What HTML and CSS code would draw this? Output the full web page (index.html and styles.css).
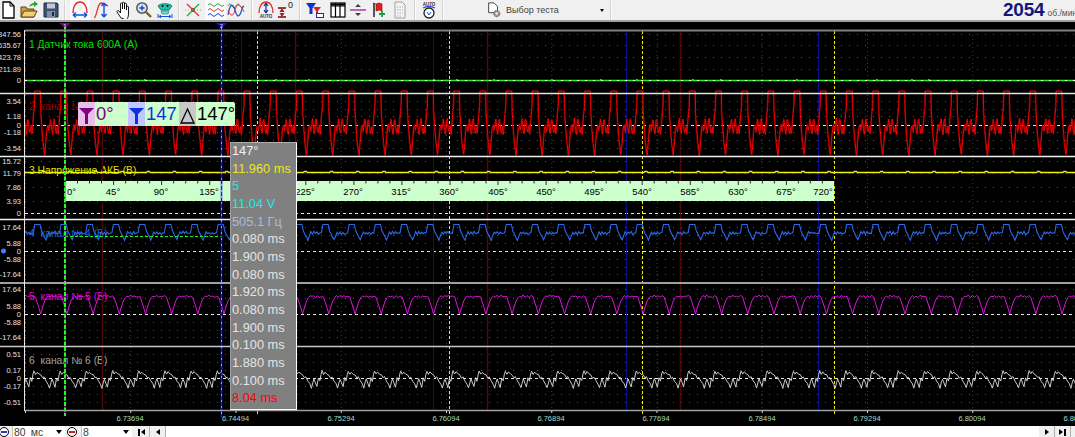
FILE: index.html
```html
<!DOCTYPE html>
<html lang="ru">
<head>
<meta charset="utf-8">
<title>Осциллограф</title>
<link rel="stylesheet" href="styles.css">
<script src="app.js" defer></script>
</head>
<body>
<div class="app">
  <header class="toolbar">
    <span class="tool"><svg viewBox="0 0 18 18"><path d="M4 1h7l4 4v12H4z" fill="#fff" stroke="#000" stroke-width="1.3"/><path d="M11 1v4h4" fill="none" stroke="#000"/></svg></span>
    <span class="tool"><svg viewBox="0 0 18 18"><path d="M1 16V6h5l1 2h7v8z" fill="#c8a040" stroke="#604010"/><path d="M1 16l3-6h13l-3 6z" fill="#f0d070" stroke="#604010"/><path d="M9 6c1-3 3-4 5-4V0l4 3-4 3V4c-2 0-3 1-5 2z" fill="#30a030"/></svg></span>
    <span class="tool"><svg viewBox="0 0 18 18"><path d="M2 2h13l1 1v13H2z" fill="#405070" stroke="#202840"/><rect x="5" y="2.500" width="8" height="5" fill="#c0c8d8"/><rect x="5" y="10" width="8" height="6" fill="#8090a8"/><rect x="10" y="11" width="2" height="4" fill="#202840"/></svg></span>
    <span class="sep"></span>
    <span class="tool tool-on"><svg viewBox="0 0 18 18"><path d="M2 12C2 5 5 1 9 1s7 4 7 11" fill="none" stroke="#e03030" stroke-width="1.500"/><path d="M2 14h14M2 14l3-2.500M2 14l3 2.500M16 14l-3-2.500M16 14l-3 2.500" fill="none" stroke="#1050e0" stroke-width="1.400"/></svg></span>
    <span class="tool"><svg viewBox="0 0 18 18"><path d="M1 17C4 16 4 3 8 2c3 0 5 2 7 3" fill="none" stroke="#e03030" stroke-width="1.300"/><path d="M11 2v14M11 2L8.500 5M11 2l2.500 3M11 16l-2.500-3M11 16l2.500-3" fill="none" stroke="#1050e0" stroke-width="1.400"/></svg></span>
    <span class="tool"><svg viewBox="0 0 18 18"><path d="M6 17l-4-6c-.5-1 1-2 2-1l1.500 2V3c0-1.500 2-1.500 2 0v5-6c0-1 2-1 2 0v6-5c0-1 2-1 2 0v6-3c0-1 2-1 2 0v7c0 3-1 4-2 6z" fill="#fff" stroke="#000" stroke-width=".9"/></svg></span>
    <span class="tool"><svg viewBox="0 0 18 18"><circle cx="7" cy="7" r="5.200" fill="#d0e4f8" stroke="#404040" stroke-width="1.300"/><path d="M4.500 7h5M7 4.500v5" stroke="#1040c0" stroke-width="1.300"/><path d="M11 11l5 5" stroke="#806020" stroke-width="2.400"/></svg></span>
    <span class="tool"><svg viewBox="0 0 18 18"><path d="M2 5c2-3 12-3 14 0l-3 4H5z" fill="#20c0b0" stroke="#108070"/><path d="M5 10h8l-1 3H6z" fill="#60e0d8" stroke="#108070" stroke-width=".6"/><circle cx="6.500" cy="5" r="1" fill="#000"/><circle cx="11.500" cy="5" r="1" fill="#000"/><path d="M3 15.500h12M3 15.500l2-1.500M3 15.500l2 1.500M15 15.500l-2-1.500M15 15.500l-2 1.500M2 13v4M16 13v4" stroke="#1050e0" fill="none"/></svg></span>
    <span class="sep"></span>
    <span class="tool"><svg viewBox="0 0 18 18"><path d="M3 3l12 12" stroke="#e03030" stroke-width="1.200"/><path d="M15 3L3 15" stroke="#30a040" stroke-width="1.200"/><path d="M1 9h16" stroke="#a0a0a0" stroke-dasharray="1 2"/><path d="M7 9l2-2 2 2-2 2z" fill="none" stroke="#e03030"/></svg></span>
    <span class="tool tool-on"><svg viewBox="0 0 18 18"><path d="M1 4q2-3 4 0t4 0 4 0 4 0" fill="none" stroke="#30a040"/><path d="M1 9q2-3 4 0t4 0 4 0 4 0" fill="none" stroke="#e03030"/><path d="M1 14q2-3 4 0t4 0 4 0 4 0" fill="none" stroke="#1050e0"/></svg></span>
    <span class="tool"><svg viewBox="0 0 18 18"><path d="M1 5q2-4 4 0t4 0 4 0 4 0" fill="none" stroke="#30a040"/><path d="M1 14C3 2 6 2 8 9s4 8 6 2 2-6 3-6" fill="none" stroke="#1050e0" stroke-width="1.200"/><path d="M1 9c3 7 5 7 7 0s5-7 9 2" fill="none" stroke="#e03030"/></svg></span>
    <span class="sep"></span>
    <span class="tool"><svg viewBox="0 0 18 18"><path d="M2 12C2 5 5 1 9 1s7 4 7 11" fill="none" stroke="#e03030" stroke-width="1.300"/><path d="M9 2v10M9 2L7 5M9 2l2 3M9 12l-2-3M9 12l2-3" fill="none" stroke="#1030a0" stroke-width="1.200"/><text class="tiny" x="9" y="17" text-anchor="middle">AUTO</text></svg></span>
    <span class="tool"><svg viewBox="0 0 18 18"><path d="M1 7h8M1 16h8" stroke="#800000" stroke-width="1.300"/><path d="M5 7l-2.500 4h5zM5 16l-2.500-4h5z" fill="#a02020"/><text class="zero" x="11" y="7">0</text></svg></span>
    <span class="sep"></span>
    <span class="tool"><svg viewBox="0 0 18 18"><path d="M0 2h10L6.500 7v6h-3V7z" fill="#1030d0"/><path d="M7 6h8l-3 4v3H10v-3z" fill="#e02030"/><rect x="10.500" y="12.500" width="7" height="4" fill="#fff" stroke="#1030a0"/></svg></span>
    <span class="tool"><svg viewBox="0 0 18 18"><rect x="2" y="2" width="14" height="14" fill="#fff" stroke="#000" stroke-width="1.200"/><path d="M2 5h14M6.500 2v14M11 2v14" stroke="#000" stroke-width="1.200"/><path d="M2 3.500h14" stroke="#000" stroke-width="2"/></svg></span>
    <span class="tool"><svg viewBox="0 0 18 18"><path d="M1 9h16" stroke="#a020a0" stroke-width="1.300"/><path d="M9 3l-3 3h6zM9 15l-3-3h6z" fill="#404040"/></svg></span>
    <span class="tool"><svg viewBox="0 0 18 18"><path d="M3 2l3 1 3-1 3 1v7l-3-1-3 1V3" fill="#e02020" stroke="#800000" stroke-width=".6"/><path d="M4 2v14" stroke="#202020" stroke-width="1.500"/><path d="M12 10v6M9 13h6" stroke="#20a030" stroke-width="1.800"/></svg></span>
    <span class="tool"><svg viewBox="0 0 18 18"><path d="M4 1h7l3 3v13H4z" fill="#f4f4f4" stroke="#a0a0a0"/><path d="M6 6h6M6 9h6M6 12h6M6 15h4" stroke="#b0b0b0" stroke-dasharray="1.500 1"/></svg></span>
    <span class="sep"></span>
    <span class="tool"><svg viewBox="0 0 18 18"><text class="tiny" x="9" y="4.500" text-anchor="middle">AUTO</text><path d="M3 7q6-3 12 0" fill="none" stroke="#1050e0" stroke-width="1.300"/><circle cx="9" cy="12" r="5" fill="#fff" stroke="#202020" stroke-width="1.300"/><path d="M7 11l2 3 2-3" fill="none" stroke="#1050e0"/></svg></span>
    <span class="sep"></span>
    <div class="combo">
      <svg class="combo-icon" viewBox="0 0 18 18"><path d="M3 1h6l4 4v7H3z" fill="#fff" stroke="#303030"/><circle cx="12" cy="13" r="3.500" fill="#a0a0a0" stroke="#404040" stroke-dasharray="1.500 .8"/><circle cx="12" cy="13" r="1.200" fill="#fff"/></svg>
      <span class="combo-text">Выбор теста</span>
      <span class="combo-arrow"></span>
    </div>
    <span class="sep"></span>
    <span class="gap"></span>
    <div class="rpm"><b>2054</b><span>об./мин</span></div>
  </header>
  <div class="rule"></div>

  <main class="scope">
    <svg class="plot" viewBox="0 22 1075 404" aria-label="Осциллограмма">
      <g id="grid"></g>
      <g class="ticks">
        <text x="21" y="36.500">847.56</text><text x="21" y="47.500">635.67</text><text x="21" y="59.500">423.78</text><text x="21" y="71.500">211.89</text><text x="21" y="82.500">0</text>
        <text x="21" y="103.500">3.54</text><text x="21" y="118.500">1.18</text><text x="21" y="127.500">0</text><text x="21" y="134.500">-1.18</text><text x="21" y="150.500">-3.54</text>
        <text x="21" y="163.500">15.72</text><text x="21" y="175.500">11.79</text><text x="21" y="189.500">7.86</text><text x="21" y="203.500">3.93</text><text x="21" y="215.500">0</text>
        <text x="21" y="229.500">17.64</text><text x="21" y="245.500">5.88</text><text x="21" y="253.500">0</text><text x="21" y="261.500">-5.88</text><text x="21" y="276.500">-17.64</text>
        <text x="21" y="291.500">17.64</text><text x="21" y="308.500">5.88</text><text x="21" y="316.500">0</text><text x="21" y="324.500">-5.88</text><text x="21" y="339.500">-17.64</text>
        <text x="21" y="356.500">0.51</text><text x="21" y="372.500">0.17</text><text x="21" y="380.500">0</text><text x="21" y="388.500">-0.17</text><text x="21" y="404.500">-0.51</text>
      </g>
      <g class="times">
        <text x="130" y="421">6.73694</text><text x="235.500" y="421">6.74494</text><text x="341" y="421">6.75294</text><text x="446" y="421">6.76094</text><text x="551" y="421">6.76894</text><text x="656" y="421">6.77694</text><text x="762" y="421">6.78494</text><text x="867" y="421">6.79294</text><text x="972" y="421">6.80094</text><text x="1077" y="421">6.80894</text>
      </g>
      <g class="names">
        <text class="n1" x="29" y="47.500">1 Датчик тока 600А (А)</text>
        <text class="n2" x="29" y="110">2  канал №</text>
        <text class="n3" x="29" y="173.500">3 Напряжение АКБ (В)</text>
        <text class="n4" x="29" y="237">4  канал № 4 (В)</text>
        <text class="n5" x="29" y="300">5  канал № 5 (В)</text>
        <text class="n6" x="29" y="363.500">6  канал № 6 (В)</text>
      </g>
      <g id="marks"></g>
      <g id="ruler">
        <rect class="ruler-bg" x="65" y="181" width="769" height="20"/>
        <g id="ruler-ticks"></g>
        <g class="ruler-text">
          <text x="67" y="195">0°</text><text class="c" x="113" y="195">45°</text><text class="c" x="161" y="195">90°</text><text class="c" x="209" y="195">135°</text><text class="c" x="305" y="195">225°</text><text class="c" x="353" y="195">270°</text><text class="c" x="401" y="195">315°</text><text class="c" x="449" y="195">360°</text><text class="c" x="498" y="195">405°</text><text class="c" x="546" y="195">450°</text><text class="c" x="594" y="195">495°</text><text class="c" x="642" y="195">540°</text><text class="c" x="690" y="195">585°</text><text class="c" x="738" y="195">630°</text><text class="c" x="786" y="195">675°</text><text class="c" x="823" y="195">720°</text>
        </g>
      </g>
      <g id="traces"></g>
      <g id="cursors"></g>
      <path class="cur-tip a" d="M59 23h12l-6 5z"/><path class="cur-tip b" d="M215.500 23h12l-6 5z"/>
      <text class="cur-num" x="65" y="27.500">1</text><text class="cur-num" x="221.500" y="27.500">2</text>
      <circle class="dot" cx="3.500" cy="251" r="2.500"/>
    </svg>

    <div class="info">
      <span class="seg seg-a"><svg viewBox="0 0 17 24"><path d="M1 6h15l-6 6v10H7V12z" fill="#800080"/></svg></span>
      <span class="val val-a">0°</span>
      <span class="seg seg-b"><svg viewBox="0 0 17 24"><path d="M1 6h15l-6 6v10H7V12z" fill="#1030e0"/></svg></span>
      <span class="val val-b">147</span>
      <span class="seg seg-c"><svg viewBox="0 0 17 24"><path d="M8.500 7L15 21H2z" fill="none" stroke="#000" stroke-width="1.300"/></svg></span>
      <span class="val val-c">147°</span>
    </div>

    <ul class="readout">
      <li class="w">147°</li>
      <li class="y">11.960 ms</li>
      <li class="c">5</li>
      <li class="c">11.04 V</li>
      <li class="b">505.1 Гц</li>
      <li>0.080 ms</li>
      <li>1.900 ms</li>
      <li>0.080 ms</li>
      <li>1.920 ms</li>
      <li>0.080 ms</li>
      <li>1.900 ms</li>
      <li>0.100 ms</li>
      <li>1.880 ms</li>
      <li>0.100 ms</li>
      <li class="r">8.04 ms</li>
    </ul>
  </main>

  <footer class="status">
    <span class="round minus"></span>
    <div class="select s1"><span>80</span><span class="unit">мс</span><i></i></div>
    <span class="round plus"></span>
    <div class="select s2"><span>8</span><i></i></div>
    <span class="nav"><b class="bar"></b><b class="left"></b></span>
    <span class="nav"><b class="left"></b></span>
    <div class="track"></div>
    <span class="nav"><b class="right"></b></span>
    <span class="nav"><b class="right"></b><b class="bar"></b></span>
    <span class="end"></span>
  </footer>
</div>
</body>
</html>
```

FILE: styles.css
```css
* { box-sizing: border-box; }
html, body { margin: 0; padding: 0; background: #000; overflow: hidden; }
body { font-family: "Liberation Sans", Arial, sans-serif; }
.app { width: 1075px; height: 437px; display: flex; flex-direction: column; overflow: hidden; }

.toolbar {
  height: 20px; flex: none; background: #f0f0f0; overflow: hidden;
  display: grid; align-items: center;
  grid-template-columns: 16px 26px 18px 10px 20px 23px 21px 19px 24px 4px 24px 21px 20px 12px 16px 24px 4px 26px 20px 20px 22px 20px 10px 18px 10px 158px 10px 1fr auto;
}
.tool { display: flex; justify-content: center; align-items: center; height: 20px; }
.tool svg { width: 18px; height: 18px; flex: none; }
.tool-on { background: #fafafa; }
.sep { justify-self: center; width: 2px; height: 19px; background: #d0d0d0; border-right: 1px solid #fff; }
.tiny { font-size: 4.500px; font-weight: bold; fill: #303030; }
.zero { font-size: 9px; fill: #202020; }
.combo { display: flex; align-items: center; height: 20px; padding-left: 38px; padding-right: 2px; }
.combo-icon { width: 16px; height: 16px; flex: none; }
.combo-text { font-size: 9px; color: #404040; margin-left: 4px; }
.combo-arrow { margin-left: auto; width: 0; height: 0; border: 2.500px solid transparent; border-top: 3px solid #000; border-bottom: 0; }
.gap { display: block; }
.rpm { display: flex; align-items: baseline; white-space: nowrap; width: 72px; }
.rpm b { font-size: 19px; line-height: 20px; color: #14147c; letter-spacing: -.2px; }
.rpm span { font-size: 8.500px; color: #505050; margin-left: 3px; }
.rule { height: 2px; flex: none; background: #a0a0a0; }

.scope { position: relative; height: 404px; flex: none; background: #000; overflow: hidden; }
.plot { display: block; width: 1075px; height: 404px; }
.plot text { font-family: "Liberation Sans", Arial, sans-serif; }
.ticks text { font-size: 7.500px; fill: #e0e0e0; text-anchor: end; }
.times text { font-size: 7.500px; fill: #a8dcc4; text-anchor: middle; }
.names text { font-size: 10.300px; white-space: pre; }
.n1 { fill: #00e000; }
.n2 { fill: #a00000; }
.n3 { fill: #e0e000; }
.n4 { fill: #2060d0; }
.n5 { fill: #e000e0; }
.n6 { fill: #a0a0a0; }
.ruler-bg { fill: #ccffcc; }
.ruler-text text { font-size: 9.500px; fill: #000; }
.ruler-text .c { text-anchor: middle; }
.cur-tip.a { fill: #800080; }
.cur-tip.b { fill: #1010e0; }
.cur-num { font-size: 5px; fill: #fff; text-anchor: middle; }
.dot { fill: #4080ff; }

.info {
  position: absolute; left: 78px; top: 80px; width: 157px; height: 24px;
  display: flex; align-items: center; background: #ccffcc; border-radius: 2px; overflow: hidden;
  font-size: 18.500px; line-height: 24px;
}
.seg { width: 17px; height: 24px; flex: none; display: block; }
.seg svg { display: block; width: 17px; height: 24px; }
.seg-a { background: #e6c0e6; }
.seg-b { background: #c0c8ff; }
.seg-c { background: #c8c8c8; }
.val { display: block; flex: none; padding-left: 1px; }
.val-a { width: 33px; color: #800080; }
.val-b { width: 34px; color: #1030e0; }
.val-c { color: #000; }

.readout {
  position: absolute; left: 230px; top: 120px; width: 67px; height: 268px;
  margin: 0; padding: 0 0 0 1px; list-style: none;
  background: #808080; border: 1px solid #fff; border-top-color: #b0b0b0; border-left-color: #a0a0a0;
  font-size: 12.800px; line-height: 17.650px; white-space: nowrap; color: #e4e4e4;
}
.readout li { position: relative; top: -1px; }
.readout .w { color: #f0f0f0; }
.readout .y { color: #e8e820; }
.readout .c { color: #20e8e8; }
.readout .b { color: #a4bcdc; }
.readout .r { color: #ff0000; }

.status { flex: 1; display: flex; align-items: flex-start; background: #f0f0f0; overflow: hidden; height: 11px; }
.round { width: 10px; height: 10px; border-radius: 50%; border: 1px solid #000; background: #fff; flex: none; margin-top: 1px; position: relative; }
.round::after { content: ""; display: block; margin: 3px 1px 0; height: 2px; background: #2040c0; }
.round.plus::after { background: #d02020; }
.minus { margin-left: -1px; margin-right: 3px; }
.plus { margin: 1px 4px 0 2px; }
.select { height: 12px; background: #fff; display: flex; align-items: center; font-size: 10.500px; color: #404040; flex: none; padding-left: 1px; border-left: 1px solid #c0c0c0; }
.select i { margin-left: auto; margin-right: 3px; width: 0; height: 0; border: 3px solid transparent; border-top: 4px solid #000; border-bottom: 0; }
.s1 { width: 53px; }
.unit { margin-left: 5px; }
.s2 { width: 51px; }
.nav { width: 16px; height: 12px; flex: none; display: flex; align-items: center; justify-content: center; gap: 1px; background: #f0f0f0; border-right: 1px solid #b0b0b0; }
.nav b { display: block; }
.nav .bar { width: 1.500px; height: 7px; background: #000; }
.nav .left { width: 0; height: 0; border: 3.500px solid transparent; border-right: 4px solid #000; border-left: 0; }
.nav .right { width: 0; height: 0; border: 3.500px solid transparent; border-left: 4px solid #000; border-right: 0; }
.select.s2 + .nav { margin-left: 2px; }
.track { flex: 1; height: 12px; background: #fff; }
.end { width: 4px; flex: none; }
```

FILE: app.js
```js
(function () {
  var NS = "http://www.w3.org/2000/svg";
  var seed = 12345;
  function rnd() { seed = (seed * 16807) % 2147483647; return seed / 2147483647; }
  function add(parent, d, stroke, width, dash) {
    var p = document.createElementNS(NS, "path");
    p.setAttribute("d", d);
    p.setAttribute("fill", "none");
    p.setAttribute("stroke", stroke);
    p.setAttribute("stroke-width", width);
    if (dash) p.setAttribute("stroke-dasharray", dash);
    parent.appendChild(p);
    return p;
  }
  function el(id) { return document.getElementById(id); }
  function hline(y, x0, x1) { return "M" + (x0 === undefined ? 25 : x0) + " " + y + "H" + (x1 === undefined ? 1075 : x1); }
  function vline(x, y0, y1) { return "M" + x + " " + y0 + "V" + y1; }

  /* grid */
  var grid = el("grid");
  var dots = [34, 45, 57, 69, 101, 109, 116, 132, 140, 148, 161, 173, 187, 201,
    227, 235, 243, 259, 267, 274, 289, 298, 306, 322, 330, 337, 354, 362, 370, 386, 394, 402];
  dots.forEach(function (y) { add(grid, hline(y + 0.5), "#585858", 1, "1 7"); });
  for (var g = 0; g < 10; g++) {
    add(grid, vline(25 + 105.25 * g + 0.5, 31, 410), "#383838", 1, "1 3");
    add(grid, vline(25 + 105.25 * g + 0.5, 410, 413), "#e0e0e0", 1);
  }
  [125, 213, 251, 314, 378].forEach(function (y) { add(grid, hline(y + 0.5), "#e8e8e8", 1, "3 3"); });

  /* repeating marks */
  var marks = el("marks");
  [102, 295, 487, 680].forEach(function (x) { add(marks, vline(x + 0.5, 31, 410), "#4c0808", 1.5); });
  [241, 433, 626, 818].forEach(function (x) { add(marks, vline(x + 0.5, 31, 410), "#0c0c90", 1); });
  [257, 449, 642, 834].forEach(function (x) { add(marks, vline(x + 0.5, 31, 414), "#f0f000", 1, "3 2"); });

  /* degree ruler ticks */
  var rt = "";
  for (var i = 0; i <= 64; i++) { rt += "M" + (65.5 + i * 12.015).toFixed(1) + " 181v" + (i % 4 === 0 ? 4 : 2.5); }
  add(el("ruler-ticks"), rt, "#303030", 1);

  /* periodic traces */
  function build(x0, period, pts) {
    var d = "", first = true;
    for (var k = -2; x0 + k * period < 1085; k++) {
      pts.forEach(function (p) {
        var x = x0 + k * period + p[0];
        var y = p[1] + (p[2] ? (rnd() - 0.5) * p[2] : 0);
        d += (first ? "M" : "L") + x.toFixed(1) + " " + y.toFixed(1);
        first = false;
      });
    }
    return d;
  }
  var tr = el("traces");
  var defs = document.createElementNS(NS, "clipPath");
  defs.setAttribute("id", "clip");
  var r = document.createElementNS(NS, "rect");
  r.setAttribute("x", 25); r.setAttribute("y", 30); r.setAttribute("width", 1050); r.setAttribute("height", 380);
  defs.appendChild(r); tr.appendChild(defs);
  tr.setAttribute("clip-path", "url(#clip)");

  var P = 26.19;

  /* 1: current, nearly flat */
  add(tr, hline(80.5), "#20f020", 1.3);
  add(tr, hline(80.5), "#ffffff", 1, "2 6");
  var blips = "";
  [118, 144, 196, 275, 308, 380, 433, 456, 493, 551, 600, 636, 692, 720, 796, 876, 911, 928].forEach(function (x) { blips += "M" + x + " 80L" + (x + 1) + " 79L" + (x + 2) + " 80"; });
  add(tr, blips, "#20d020", 1);

  /* 2: red pulses */
  var ch2 = [[0, 91], [5, 91], [5.4, 112, 2], [6.4, 128, 3], [7.6, 142, 3], [8.6, 151, 2], [9.3, 155, 2], [10.4, 142, 3],
    [11.6, 128, 3], [12.6, 125, 2], [13.4, 131, 3], [14.2, 126, 2], [15.2, 119, 2], [16.2, 129, 3], [17.2, 134, 2],
    [18.2, 121, 2], [19, 119, 2], [20, 129, 3], [21, 133, 2], [22, 126, 2], [22.8, 134, 2], [23.6, 125, 2],
    [24.4, 114, 2], [25.2, 107, 2], [25.6, 91]];
  add(tr, build(34.9, P, ch2), "#7a0000", 0.9);
  add(tr, build(35.5, P, ch2), "#f00000", 1);

  /* 3: battery voltage */
  add(tr, build(35, P, [[0, 172.5], [6.5, 172.5], [7.5, 171.5], [9.5, 171.5], [10.5, 172.5]]), "#f0f000", 1.3);

  /* 4: blue */
  add(tr, build(35.5, P, [[0, 224.5], [4.5, 224.5], [6, 231, 1], [7.5, 234, 1], [9, 237, 1], [10.5, 240, 1], [12, 236, 1], [13.5, 232, 1],
    [15, 234, 1.5], [16.5, 232, 1.5], [18, 234, 1.5], [19.5, 232, 1.5], [21, 234, 1.5], [22.5, 233, 1], [24, 233, 1], [25.5, 224.5]]), "#2a6ae8", 1.1);

  /* 5: magenta */
  add(tr, build(40.7, P, [[0, 314], [2, 307], [4, 301], [6, 297.5], [7.5, 296, 1], [9.5, 297, 1.5], [11, 295.5, 1.5], [13, 297, 1.5], [15, 296, 1.5],
    [17, 297, 1.5], [19, 296, 1.5], [21, 297, 1], [22.5, 302], [24.5, 308]]), "#e010e0", 1);

  /* 6: white */
  add(tr, build(34, P, [[0, 371, 1], [1.5, 374, 1], [3, 372, 1], [5, 374, 1], [7, 375, 1], [8.5, 378, 1], [10, 377, 1], [12, 381, 1], [14, 384, 1],
    [15.5, 388, 1], [17, 382, 1], [18, 379, 1], [19.5, 383, 1], [21, 387, 1.5], [22.5, 378, 1], [24, 381, 1], [25.2, 374, 1]]), "#e0e0e0", 0.9);

  /* cursors */
  var c = el("cursors");
  add(c, hline(236.5, 65, 221), "#20f020", 1, "3 2");
  add(c, vline(65, 28, 416), "#a000a0", 1);
  add(c, vline(65, 28, 416), "#20ff20", 2, "4 1.5");
  add(c, vline(221.5, 28, 417), "#1818f0", 1.5);
  add(c, vline(221.5, 28, 417), "#20e0e0", 1, "2 4");

  /* frame, drawn last so it sits above the traces' edges */
  add(c, hline(30.5, 25), "#808080", 2);
  add(c, hline(93.5, 0), "#e4e4e4", 1.4);
  add(c, hline(156.5, 0), "#f0f0f0", 1.4);
  add(c, hline(219.5, 0), "#f0f0f0", 1.4);
  add(c, hline(283, 0), "#a0a0a0", 2);
  add(c, hline(346.5, 0), "#c8c8c8", 1.4);
  add(c, hline(410.5, 24), "#a0a0a0", 1.6);
  add(c, vline(24.5, 30, 411), "#e8e8e8", 1);
})();
```
